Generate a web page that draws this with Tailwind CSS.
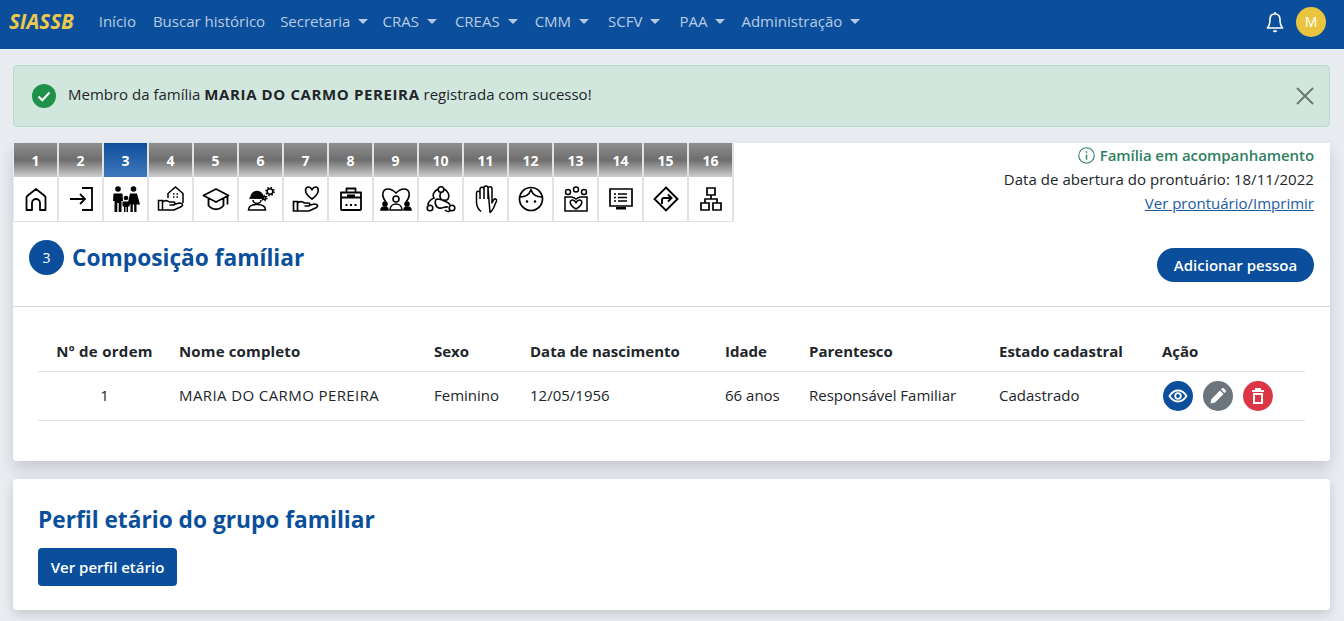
<!DOCTYPE html>
<html lang="pt-BR">
<head>
    <meta charset="UTF-8">
    <meta name="viewport" content="width=device-width, initial-scale=1.0">
    <title>SIASSB - Composição familiar</title>
    <script src="https://cdn.jsdelivr.net/npm/@tailwindcss/browser@4"></script>
</head>
<body class="bg-[#e9ecf1] h-[621px] overflow-hidden font-['Open_Sans',sans-serif] text-[15px] text-[#212529]">
    <!-- Navbar -->
    <nav class="h-[49px] bg-[#0b4f9c] flex items-center pl-[9px] pr-[18px] pb-[6px] text-[15px] text-[#b9cbe3]">
        <a class="font-bold italic text-[#ecc94b] text-[20.500px] mr-[25px]">SIASSB</a>
        <div class="flex items-center gap-[16px]">
            <a>Início</a>
            <a class="ml-[1px]">Buscar histórico</a>
            <a class="flex items-center gap-[8px] -ml-[1px]">Secretaria <span class="w-0 h-0 border-x-[5px] border-x-transparent border-t-[5px] border-t-[#b9cbe3]"></span></a>
            <a class="flex items-center gap-[8px] -ml-[2px]">CRAS <span class="w-0 h-0 border-x-[5px] border-x-transparent border-t-[5px] border-t-[#b9cbe3]"></span></a>
            <a class="flex items-center gap-[8px] ml-[2px]">CREAS <span class="w-0 h-0 border-x-[5px] border-x-transparent border-t-[5px] border-t-[#b9cbe3]"></span></a>
            <a class="flex items-center gap-[8px] ml-[1px]">CMM <span class="w-0 h-0 border-x-[5px] border-x-transparent border-t-[5px] border-t-[#b9cbe3]"></span></a>
            <a class="flex items-center gap-[8px] ml-[3px]">SCFV <span class="w-0 h-0 border-x-[5px] border-x-transparent border-t-[5px] border-t-[#b9cbe3]"></span></a>
            <a class="flex items-center gap-[8px] ml-[3px]">PAA <span class="w-0 h-0 border-x-[5px] border-x-transparent border-t-[5px] border-t-[#b9cbe3]"></span></a>
            <a class="flex items-center gap-[8px]">Administração <span class="w-0 h-0 border-x-[5px] border-x-transparent border-t-[5px] border-t-[#b9cbe3]"></span></a>
        </div>
        <div class="ml-auto flex items-center gap-[11px] mt-[6px] -translate-y-[3px]">
            <svg class="w-[20px] h-[22px]" viewBox="0 0 20 22" fill="none" stroke="#fff" stroke-width="1.600" stroke-linejoin="round"><path d="M10 1v2M10 3c-3.400 0-5 2.500-5 5.500 0 4-.8 6.500-2.600 8.500h15.200c-1.800-2-2.600-4.500-2.600-8.500C15 5.500 13.400 3 10 3z"/><path d="M8.500 19.500c.5 1 2.500 1 3 0" stroke-width="1.800"/></svg>
            <span class="w-[30px] h-[30px] rounded-full bg-[#e9c53f] text-white text-[14px] flex items-center justify-center">M</span>
        </div>
    </nav>

    <main class="px-[13px] pr-[14px] pt-[16px]">
        <!-- Alert -->
        <div class="h-[62px] bg-[#d1e7dd] border border-[#badbcc] rounded-[4px] flex items-center pl-[18px] pr-[15px]">
            <svg class="w-[24px] h-[24px] mr-[12px]" viewBox="0 0 24 24"><circle cx="12" cy="12" r="12" fill="#1f9149"/><path d="M6.500 12.500l3.800 3.800 7.200-7.800" fill="none" stroke="#fff" stroke-width="2"/></svg>
            <p class="text-[#212529] -mt-[3px]">Membro da família <b class="font-bold tracking-[0.62px]">MARIA DO CARMO PEREIRA</b> registrada com sucesso!</p>
            <svg class="ml-auto w-[18px] h-[18px]" viewBox="0 0 18 18" stroke="#66766f" stroke-width="1.800" fill="none"><path d="M1 1l16 16M17 1L1 17"/></svg>
        </div>

        <div class="mt-[16px] shadow-[0_8px_16px_rgba(0,0,0,0.15)] rounded-b-[4px]">
        <!-- Tabs + info -->
        <div class="flex bg-white h-[79px]">
            <div class="flex w-[720px] shrink-0 bg-[#e9ecf1] pl-[1px]">
                <div class="w-[45px] shrink-0 border-r-2 border-[#e2e2e2] flex flex-col">
                    <div class="h-[34px] bg-linear-to-b from-[#8f8f8f] via-[#6e6e6e] via-50% to-[#cfcfcf] text-white font-bold text-[14px] flex items-center justify-center">1</div>
                    <div class="flex-1 bg-white border-b border-[#e0e0e0] flex items-center justify-center">
                        <svg class="w-[26px] h-[26px]" viewBox="0 0 26 26" fill="none" stroke="#000" stroke-width="1.800" stroke-linejoin="round"><path d="M3.500 24V11.500q0-1 1-1.800L13 3l8.500 6.700q1 .8 1 1.800V24H17v-7a4 4 0 0 0-8 0v7z"/></svg>
                    </div>
                </div>
                <div class="w-[45px] shrink-0 border-r-2 border-[#e2e2e2] flex flex-col">
                    <div class="h-[34px] bg-linear-to-b from-[#8f8f8f] via-[#6e6e6e] via-50% to-[#cfcfcf] text-white font-bold text-[14px] flex items-center justify-center">2</div>
                    <div class="flex-1 bg-white border-b border-[#e0e0e0] flex items-center justify-center">
                        <svg class="w-[26px] h-[26px]" viewBox="0 0 26 26" fill="none" stroke="#000" stroke-width="1.800"><path d="M14 2h10v22H14M2 13h15M12 8l5 5-5 5"/></svg>
                    </div>
                </div>
                <div class="w-[45px] shrink-0 border-r-2 border-[#e2e2e2] flex flex-col">
                    <div class="h-[34px] bg-linear-to-b from-[#0b4f9c] to-[#3f78bb] text-white font-bold text-[14px] flex items-center justify-center">3</div>
                    <div class="flex-1 bg-white border-b border-[#e0e0e0] flex items-center justify-center">
                        <svg class="w-[28px] h-[27px]" viewBox="0 0 28 27" fill="#000"><circle cx="6" cy="3" r="2.800"/><circle cx="21.500" cy="3" r="2.800"/><circle cx="14" cy="12" r="2.300"/><path d="M1.500 7.500h9l.5 7.500H9.500v11H6.700v-9h-1.400v9H2.500V15H1zM18 7.500h7l3 11h-3.500V26h-2.300v-7.500h-1.400V26h-2.300v-7.500h-3zM10.500 15.500h7v5H16V26h-1.500v-5h-1v5H12v-5.500h-1.500z"/></svg>
                    </div>
                </div>
                <div class="w-[45px] shrink-0 border-r-2 border-[#e2e2e2] flex flex-col">
                    <div class="h-[34px] bg-linear-to-b from-[#8f8f8f] via-[#6e6e6e] via-50% to-[#cfcfcf] text-white font-bold text-[14px] flex items-center justify-center">4</div>
                    <div class="flex-1 bg-white border-b border-[#e0e0e0] flex items-center justify-center">
                        <svg class="w-[28px] h-[28px]" viewBox="0 0 28 28" fill="none" stroke="#000" stroke-width="1.500"><path d="M11 13V8.500l7.500-6.500L26 8.500V18M1.500 15.500h4V25h-4zM5.500 17c3-2.500 5-1.500 7 0h4c2 0 2 3 0 3h-4M16.500 19.500l6-1.500c3 0 4 2 2 3.500l-7.500 3.500H5.500"/><path d="M16 9h1.500M19.500 9H21M16 12h1.500M19.500 12H21"/></svg>
                    </div>
                </div>
                <div class="w-[45px] shrink-0 border-r-2 border-[#e2e2e2] flex flex-col">
                    <div class="h-[34px] bg-linear-to-b from-[#8f8f8f] via-[#6e6e6e] via-50% to-[#cfcfcf] text-white font-bold text-[14px] flex items-center justify-center">5</div>
                    <div class="flex-1 bg-white border-b border-[#e0e0e0] flex items-center justify-center">
                        <svg class="w-[28px] h-[24px]" viewBox="0 0 28 24" fill="none" stroke="#000" stroke-width="1.800" stroke-linejoin="round"><path d="M14 2L1.500 8.500 14 15l12.500-6.500zM6.500 11.500v7c4 5 11 5 15 0v-7M25.500 9.500v8"/></svg>
                    </div>
                </div>
                <div class="w-[45px] shrink-0 border-r-2 border-[#e2e2e2] flex flex-col">
                    <div class="h-[34px] bg-linear-to-b from-[#8f8f8f] via-[#6e6e6e] via-50% to-[#cfcfcf] text-white font-bold text-[14px] flex items-center justify-center">6</div>
                    <div class="flex-1 bg-white border-b border-[#e0e0e0] flex items-center justify-center">
                        <svg class="w-[28px] h-[26px]" viewBox="0 0 28 26" fill="none" stroke="#000" stroke-width="1.500"><path d="M4 11.500a6 6 0 0 1 12 0z" fill="#000"/><path d="M2.500 12h15" stroke-width="1.800"/><path d="M6 14a4 3.500 0 0 0 8 0M1.500 24c0-4 4-5.500 8.500-5.500s8.500 1.500 8.500 5.500z"/><circle cx="23" cy="5.500" r="2.800"/><circle cx="23" cy="5.500" r="4" stroke-dasharray="1.500 1.640" stroke-width="1.600"/><circle cx="17.500" cy="12" r="1.500"/><circle cx="17.500" cy="12" r="2.600" stroke-dasharray="1.300 1.430" stroke-width="1.300"/></svg>
                    </div>
                </div>
                <div class="w-[45px] shrink-0 border-r-2 border-[#e2e2e2] flex flex-col">
                    <div class="h-[34px] bg-linear-to-b from-[#8f8f8f] via-[#6e6e6e] via-50% to-[#cfcfcf] text-white font-bold text-[14px] flex items-center justify-center">7</div>
                    <div class="flex-1 bg-white border-b border-[#e0e0e0] flex items-center justify-center">
                        <svg class="w-[28px] h-[28px]" viewBox="0 0 28 28" fill="none" stroke="#000" stroke-width="1.700"><path d="M20 14c-9-6-7-12-3.500-12 2 0 3.500 2.500 3.500 2.500S21.500 2 23.500 2c3.500 0 5 6-3.500 12zM1.500 16.500h4V26h-4zM5.500 18c3-2.500 5-1.500 7 0h4c2 0 2 3 0 3h-4M16.500 20.500l6-1.500c3 0 4 2 2 3.500L17 26H5.500"/></svg>
                    </div>
                </div>
                <div class="w-[45px] shrink-0 border-r-2 border-[#e2e2e2] flex flex-col">
                    <div class="h-[34px] bg-linear-to-b from-[#8f8f8f] via-[#6e6e6e] via-50% to-[#cfcfcf] text-white font-bold text-[14px] flex items-center justify-center">8</div>
                    <div class="flex-1 bg-white border-b border-[#e0e0e0] flex items-center justify-center">
                        <svg class="w-[26px] h-[26px]" viewBox="0 0 26 26" fill="none" stroke="#000" stroke-width="1.800" stroke-linejoin="round"><path d="M3 6.500h20V23a1 1 0 0 1-1 1H4a1 1 0 0 1-1-1zM8.500 6.500V2.500h9v4M3 11.500h20M9 9.500h8"/><path d="M7.500 19h2M12 19h2M16.500 19h2" stroke-width="2"/></svg>
                    </div>
                </div>
                <div class="w-[45px] shrink-0 border-r-2 border-[#e2e2e2] flex flex-col">
                    <div class="h-[34px] bg-linear-to-b from-[#8f8f8f] via-[#6e6e6e] via-50% to-[#cfcfcf] text-white font-bold text-[14px] flex items-center justify-center">9</div>
                    <div class="flex-1 bg-white border-b border-[#e0e0e0] flex items-center justify-center">
                        <svg class="w-[32px] h-[26px]" viewBox="0 0 32 26" fill="none" stroke="#000" stroke-width="1.600"><path d="M6 16C1 10 2 3 8 3c4 0 6 2 8 4 2-2 4-4 8-4 6 0 7 7 2 13"/><circle cx="16" cy="13" r="3"/><path d="M10 24c0-4 3-6 6-6s6 2 6 6z"/><circle cx="5" cy="18" r="2" fill="#000"/><circle cx="27" cy="18" r="2" fill="#000"/><path d="M1 24c0-2 2-3 4-3s3 1 3 3zM24 24c0-2 1-3 3-3s4 1 4 3z" fill="#000"/></svg>
                    </div>
                </div>
                <div class="w-[45px] shrink-0 border-r-2 border-[#e2e2e2] flex flex-col">
                    <div class="h-[34px] bg-linear-to-b from-[#8f8f8f] via-[#6e6e6e] via-50% to-[#cfcfcf] text-white font-bold text-[14px] flex items-center justify-center">10</div>
                    <div class="flex-1 bg-white border-b border-[#e0e0e0] flex items-center justify-center">
                        <svg class="w-[30px] h-[28px]" viewBox="0 0 30 28" fill="none" stroke="#000" stroke-width="1.600"><circle cx="15" cy="4.500" r="2.800"/><circle cx="4" cy="23" r="2.800"/><circle cx="26" cy="23" r="2.800"/><path d="M12 4C8 6 6 10 8 13c-3 1-6 4-6 7M18 4c4 2 6 6 4 10-2 3-7 0-11 0-3 1-2 8 2 9 3 1 6-2 9-1M15 7.500c-2 3-1 7 2 8 3 1 6 2 7 4.500M24 26c-2 1-4 0-5-1"/></svg>
                    </div>
                </div>
                <div class="w-[45px] shrink-0 border-r-2 border-[#e2e2e2] flex flex-col">
                    <div class="h-[34px] bg-linear-to-b from-[#8f8f8f] via-[#6e6e6e] via-50% to-[#cfcfcf] text-white font-bold text-[14px] flex items-center justify-center">11</div>
                    <div class="flex-1 bg-white border-b border-[#e0e0e0] flex items-center justify-center">
                        <svg class="w-[24px] h-[28px]" viewBox="0 0 24 28" fill="none" stroke="#000" stroke-width="1.500" stroke-linejoin="round"><path d="M7 26.500C4 24 2.500 21 2.500 17V8c0-2.400 3.500-2.400 3.500 0v6M6 8V4c0-2.400 4-2.400 4 0v10M10 4V2.800c0-2.400 4-2.400 4 0V14M14 3.500c0-2.400 4-2.400 4 0V18l1.500-3c1-2 3.500-1 3 1l-3 7c-1 2-2 3.500-3.500 4.500z"/></svg>
                    </div>
                </div>
                <div class="w-[45px] shrink-0 border-r-2 border-[#e2e2e2] flex flex-col">
                    <div class="h-[34px] bg-linear-to-b from-[#8f8f8f] via-[#6e6e6e] via-50% to-[#cfcfcf] text-white font-bold text-[14px] flex items-center justify-center">12</div>
                    <div class="flex-1 bg-white border-b border-[#e0e0e0] flex items-center justify-center">
                        <svg class="w-[26px] h-[26px]" viewBox="0 0 26 26" fill="none" stroke="#000" stroke-width="1.700"><circle cx="13" cy="13" r="11.500"/><path d="M2 11c5 0 9-2 11-7 2 5 6 7 11 7"/><circle cx="9" cy="15.500" r="1.300" fill="#000" stroke="none"/><circle cx="17" cy="15.500" r="1.300" fill="#000" stroke="none"/></svg>
                    </div>
                </div>
                <div class="w-[45px] shrink-0 border-r-2 border-[#e2e2e2] flex flex-col">
                    <div class="h-[34px] bg-linear-to-b from-[#8f8f8f] via-[#6e6e6e] via-50% to-[#cfcfcf] text-white font-bold text-[14px] flex items-center justify-center">13</div>
                    <div class="flex-1 bg-white border-b border-[#e0e0e0] flex items-center justify-center">
                        <svg class="w-[28px] h-[26px]" viewBox="0 0 28 26" fill="none" stroke="#000" stroke-width="1.500"><circle cx="6" cy="6" r="2.500"/><circle cx="14" cy="3.500" r="2.500"/><circle cx="22" cy="6" r="2.500"/><path d="M3 11h6c2 0 3 1 5 2 2-1 3-2 5-2h6v14H3zM14 23c-7-4-7-9-3.500-9 2 0 3.500 2.500 3.500 2.500s1.500-2.500 3.500-2.500c3.500 0 3.500 5-3.500 9z"/></svg>
                    </div>
                </div>
                <div class="w-[45px] shrink-0 border-r-2 border-[#e2e2e2] flex flex-col">
                    <div class="h-[34px] bg-linear-to-b from-[#8f8f8f] via-[#6e6e6e] via-50% to-[#cfcfcf] text-white font-bold text-[14px] flex items-center justify-center">14</div>
                    <div class="flex-1 bg-white border-b border-[#e0e0e0] flex items-center justify-center">
                        <svg class="w-[26px] h-[24px]" viewBox="0 0 26 24" fill="none" stroke="#000" stroke-width="1.700"><path d="M2 2h22v17H2z"/><path d="M8 20h10v2.500H8z" fill="#000" stroke="none"/><path d="M10 7h9M10 10.500h9M10 14h9M6 7h2M6 10.500h2M6 14h2"/></svg>
                    </div>
                </div>
                <div class="w-[45px] shrink-0 border-r-2 border-[#e2e2e2] flex flex-col">
                    <div class="h-[34px] bg-linear-to-b from-[#8f8f8f] via-[#6e6e6e] via-50% to-[#cfcfcf] text-white font-bold text-[14px] flex items-center justify-center">15</div>
                    <div class="flex-1 bg-white border-b border-[#e0e0e0] flex items-center justify-center">
                        <svg class="w-[26px] h-[26px]" viewBox="0 0 26 26" fill="none" stroke="#000" stroke-width="1.900"><path d="M13 1.500L24.500 13 13 24.500 1.500 13z"/><path d="M9 18v-4a2 2 0 0 1 2-2h7M15 8.500l3.500 3.500-3.500 3.500"/></svg>
                    </div>
                </div>
                <div class="w-[45px] shrink-0 border-r-2 border-[#e2e2e2] flex flex-col">
                    <div class="h-[34px] bg-linear-to-b from-[#8f8f8f] via-[#6e6e6e] via-50% to-[#cfcfcf] text-white font-bold text-[14px] flex items-center justify-center">16</div>
                    <div class="flex-1 bg-white border-b border-[#e0e0e0] flex items-center justify-center">
                        <svg class="w-[24px] h-[26px]" viewBox="0 0 24 26" fill="none" stroke="#000" stroke-width="1.700"><path d="M8 2h8v7H8zM2 17h8v7H2zM14 17h8v7h-8zM12 9v4M6 17v-4h12v4"/></svg>
                    </div>
                </div>
            </div>
            <div class="flex-1 flex flex-col items-end pr-[16px] text-[15px] leading-[24px]">
                <div class="flex items-center gap-[5px] font-semibold text-[#2f8062] tracking-[-0.07px]">
                    <svg class="w-[17px] h-[17px]" viewBox="0 0 16 16" fill="none" stroke="#2f8062" stroke-width="1"><circle cx="8" cy="8" r="7.300"/><path d="M8 7v5M8 4v1.500" stroke-width="1.300"/></svg>
                    Família em acompanhamento
                </div>
                <div class="tracking-[0.05px]">Data de abertura do prontuário: 18/11/2022</div>
                <a class="text-[#205b9f] underline">Ver prontuário/Imprimir</a>
            </div>
        </div>

        <!-- Section header -->
        <div class="h-[85px] bg-white border-b border-[#d8d8d8] flex justify-between pl-[16px] pr-[16px]">
            <div class="flex items-start gap-[8px] pt-[18px]">
                <span class="w-[35px] h-[35px] rounded-full bg-[#0b4f9c] text-white text-[14px] flex items-center justify-center">3</span>
                <h1 class="text-[22.700px] font-bold text-[#0b4f9c] leading-[35px]">Composição famíliar</h1>
            </div>
            <button class="mt-[26px] h-[34px] w-[157px] rounded-full bg-[#0b4f9c] text-white font-semibold text-[15px]">Adicionar pessoa</button>
        </div>

        <!-- Table -->
        <div class="h-[154px] bg-white rounded-b-[4px] px-[25px] pt-[27px]">
            <table class="w-full text-left border-collapse text-[15px]">
                <thead>
                    <tr class="h-[37px] border-b border-[#dee2e6]">
                        <th class="w-[141px] font-bold text-center pr-[8px] pb-[3px] tracking-[0.3px]">Nº de ordem</th>
                        <th class="w-[255px] font-bold pb-[3px] tracking-[0.15px]">Nome completo</th>
                        <th class="w-[96px] font-bold pb-[3px]">Sexo</th>
                        <th class="w-[195px] font-bold pb-[3px]">Data de nascimento</th>
                        <th class="w-[84px] font-bold pb-[3px]">Idade</th>
                        <th class="w-[190px] font-bold pb-[3px]">Parentesco</th>
                        <th class="w-[163px] font-bold pb-[3px]">Estado cadastral</th>
                        <th class="font-bold pb-[3px]">Ação</th>
                    </tr>
                </thead>
                <tbody>
                    <tr class="h-[49px] border-b border-[#dee2e6]">
                        <td class="text-center pr-[8px]">1</td>
                        <td class="tracking-[0.4px]">MARIA DO CARMO PEREIRA</td>
                        <td>Feminino</td>
                        <td>12/05/1956</td>
                        <td>66 anos</td>
                        <td>Responsável Familiar</td>
                        <td>Cadastrado</td>
                        <td>
                            <div class="flex gap-[10px] ml-[1px]">
                                <span class="w-[30px] h-[30px] rounded-full bg-[#0b4f9c] flex items-center justify-center">
                                    <svg class="w-[20px] h-[20px]" viewBox="0 0 20 20" fill="none" stroke="#fff" stroke-width="1.800"><path d="M1.500 10C4 6 7 4.500 10 4.500S16 6 18.500 10C16 14 13 15.500 10 15.500S4 14 1.500 10z"/><circle cx="10" cy="10" r="2.800"/></svg>
                                </span>
                                <span class="w-[30px] h-[30px] rounded-full bg-[#6c757d] flex items-center justify-center">
                                    <svg class="w-[18px] h-[18px]" viewBox="0 0 18 18" fill="#fff"><path d="M1.500 16.500l1-4.500L11 3.500l3.500 3.500L6 15.500zM12 2.500l1-1c.7-.6 1.400-.6 2 0l1.500 1.500c.6.600.6 1.300 0 2l-1 1z"/></svg>
                                </span>
                                <span class="w-[30px] h-[30px] rounded-full bg-[#dc3545] flex items-center justify-center">
                                    <svg class="w-[18px] h-[18px]" viewBox="0 0 18 18" fill="none" stroke="#fff" stroke-width="2"><path d="M3 4h12M7 4V2h4v2M5 7h8v9H5z"/></svg>
                                </span>
                            </div>
                        </td>
                    </tr>
                </tbody>
            </table>
        </div>
        </div>

        <!-- Perfil etario -->
        <div class="mt-[18px] h-[131px] bg-white rounded-[4px] shadow-[0_4px_12px_rgba(0,0,0,0.15)] px-[25px] pt-[23px]">
            <h2 class="text-[22.700px] font-bold text-[#0b4f9c] leading-[36px]">Perfil etário do grupo familiar</h2>
            <button class="mt-[10px] h-[38px] w-[139px] rounded-[4px] bg-[#0b4f9c] text-white font-semibold text-[15px]">Ver perfil etário</button>
        </div>
    </main>
</body>
</html>
